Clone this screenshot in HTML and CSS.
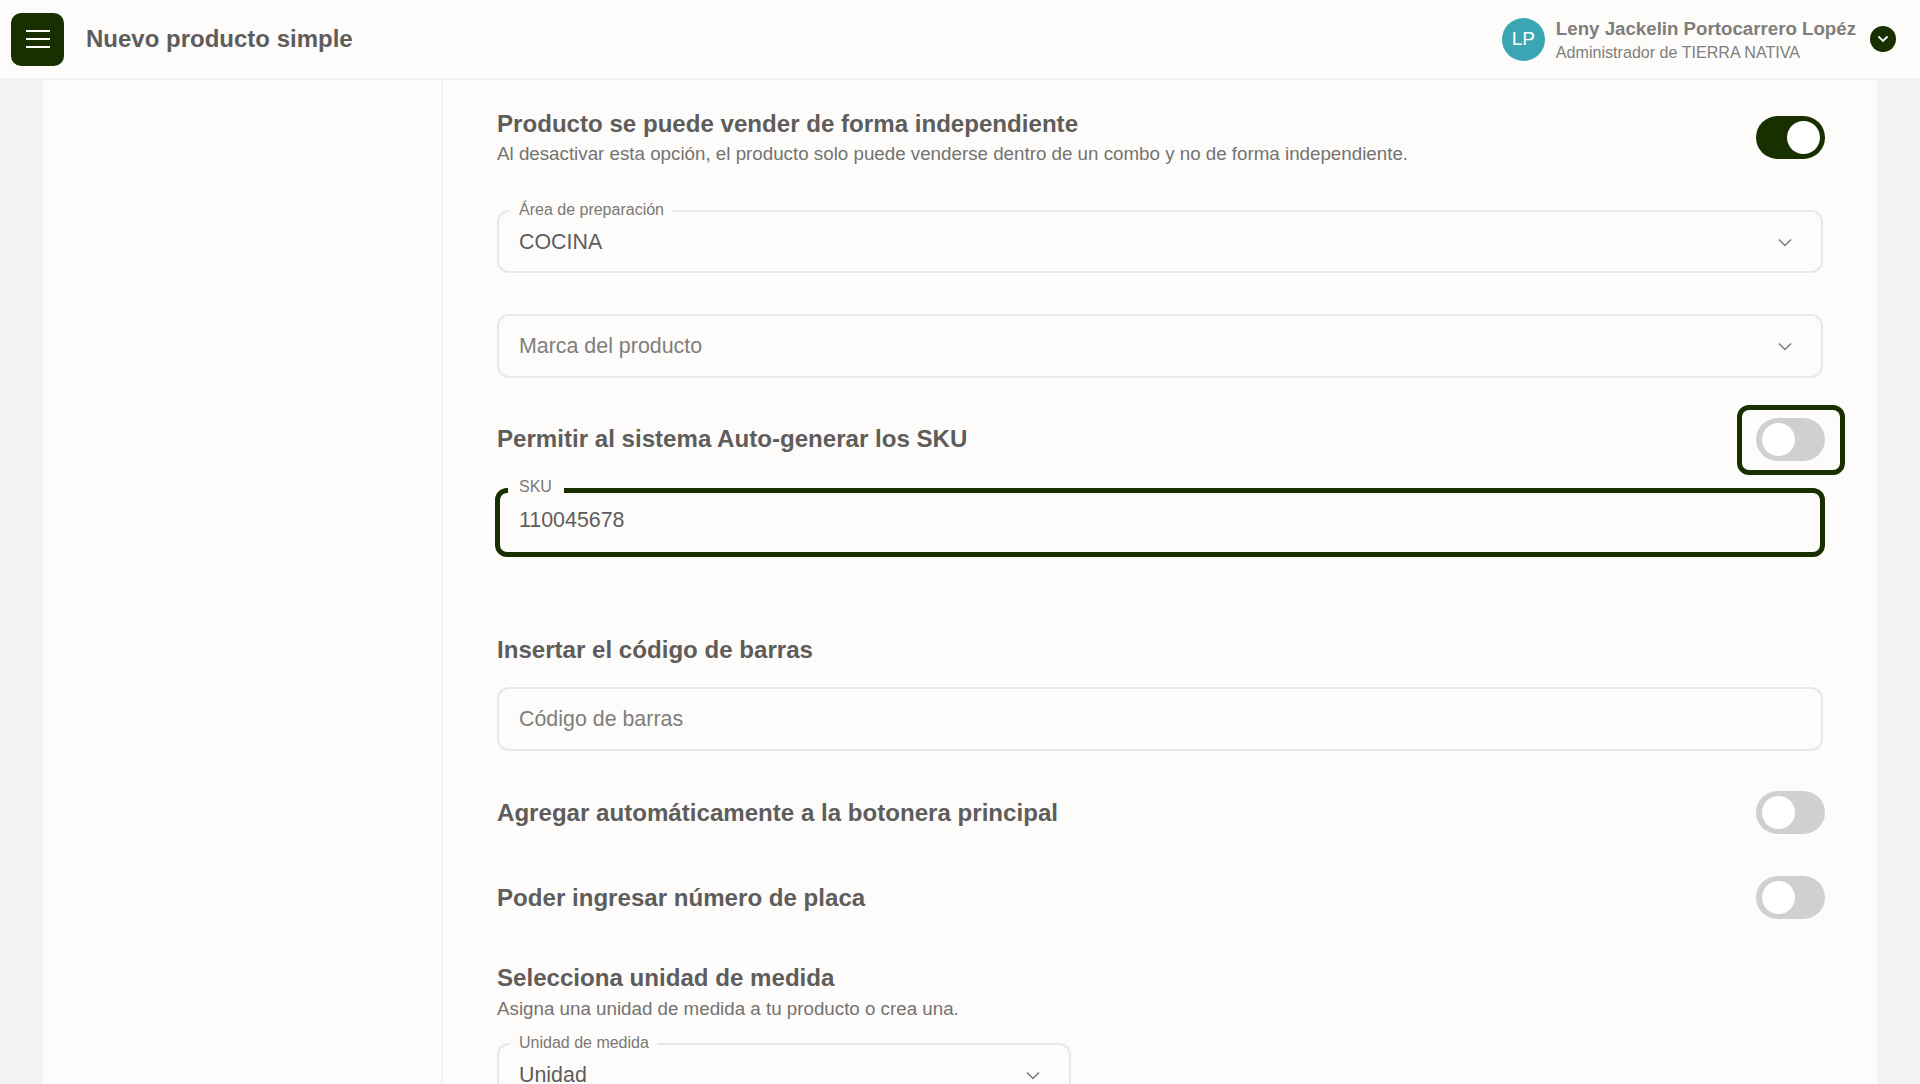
FILE: index.html
```html
<!DOCTYPE html>
<html lang="es">

<head>
    <meta charset="UTF-8">
    <title>Nuevo producto simple</title>
    <link rel="stylesheet" href="styles.css">
</head>

<body>
    <header class="topbar">
        <button class="menu-btn" type="button" aria-label="Menú">
            <svg width="26" height="20" viewBox="0 0 26 20">
                <path d="M1 2h24M1 10h24M1 18h24" stroke="#fff" stroke-width="2.2" fill="none" />
            </svg>
        </button>
        <h1 class="page-title">Nuevo producto simple</h1>
        <div class="user">
            <div class="avatar">LP</div>
            <div class="user-info">
                <div class="user-name">Leny Jackelin Portocarrero Lopéz</div>
                <div class="user-role">Administrador de TIERRA NATIVA</div>
            </div>
            <div class="user-chevron">
                <svg width="12" height="8" viewBox="0 0 12 8">
                    <path d="M1.5 1.5L6 6l4.5-4.5" stroke="#fff" stroke-width="1.8" fill="none" />
                </svg>
            </div>
        </div>
    </header>

    <main class="card">
        <aside class="side"></aside>
        <section class="form">
            <div class="row row-first">
                <div>
                    <h2 class="row-title">Producto se puede vender de forma independiente</h2>
                    <p class="row-sub">Al desactivar esta opción, el producto solo puede venderse dentro de un combo y no de forma independiente.</p>
                </div>
                <span class="toggle on"></span>
            </div>

            <fieldset class="field field-area">
                <legend>Área de preparación</legend>
                <span class="value">COCINA</span>
                <svg class="chev" width="14" height="9" viewBox="0 0 14 9">
                    <path d="M1 1.5l6 6 6-6" stroke="#777" stroke-width="1.4" fill="none" />
                </svg>
            </fieldset>

            <div class="field field-plain field-brand">
                <span class="value muted">Marca del producto</span>
                <svg class="chev" width="14" height="9" viewBox="0 0 14 9">
                    <path d="M1 1.5l6 6 6-6" stroke="#777" stroke-width="1.4" fill="none" />
                </svg>
            </div>

            <div class="row row-sku">
                <h2 class="row-title">Permitir al sistema Auto-generar los SKU</h2>
                <span class="toggle-focus"><span class="toggle"></span></span>
            </div>

            <fieldset class="field field-sku">
                <legend>SKU</legend>
                <span class="value">110045678</span>
            </fieldset>

            <h2 class="row-title title-barcode">Insertar el código de barras</h2>
            <div class="field field-plain field-barcode">
                <span class="value muted">Código de barras</span>
            </div>

            <div class="row row-auto">
                <h2 class="row-title">Agregar automáticamente a la botonera principal</h2>
                <span class="toggle"></span>
            </div>

            <div class="row row-plate">
                <h2 class="row-title">Poder ingresar número de placa</h2>
                <span class="toggle"></span>
            </div>

            <h2 class="row-title title-unit">Selecciona unidad de medida</h2>
            <p class="row-sub sub-unit">Asigna una unidad de medida a tu producto o crea una.</p>
            <fieldset class="field field-unit">
                <legend>Unidad de medida</legend>
                <span class="value">Unidad</span>
                <svg class="chev" width="14" height="9" viewBox="0 0 14 9">
                    <path d="M1 1.5l6 6 6-6" stroke="#777" stroke-width="1.4" fill="none" />
                </svg>
            </fieldset>
        </section>
    </main>
</body>

</html>
```

FILE: styles.css
```css
* {
    box-sizing: border-box;
}

html,
body {
    height: 100%;
    margin: 0;
}

body {
    display: flex;
    flex-direction: column;
    overflow: hidden;
    background-color: #f3f2f1;
    color: #5e5d5b;
    font-family: "Liberation Sans", Arial, sans-serif;
}

/* barra superior */
.topbar {
    display: flex;
    align-items: center;
    flex: none;
    height: 80px;
    padding: 0 24px 0 11px;
    background-color: #fdfcfa;
    border-bottom: 2px solid #f3f2f0;
}

.menu-btn {
    display: flex;
    align-items: center;
    justify-content: center;
    width: 53px;
    height: 53px;
    padding: 0;
    background-color: #182f00;
    border: 0;
    border-radius: 10px;
}

.page-title {
    margin: 0 0 0 22px;
    font-size: 24px;
    font-weight: bold;
}

.user {
    display: flex;
    align-items: center;
    margin-left: auto;
}

.avatar {
    display: flex;
    align-items: center;
    justify-content: center;
    width: 43px;
    height: 43px;
    background-color: #3aa6b3;
    border-radius: 50%;
    color: #fff;
    font-size: 19px;
}

.user-info {
    margin-left: 11px;
    padding-top: 1px;
    color: #7f7e7c;
}

.user-name {
    font-size: 18.7px;
    font-weight: bold;
    line-height: 24px;
}

.user-role {
    font-size: 16.1px;
    line-height: 22px;
}

.user-chevron {
    display: flex;
    align-items: center;
    justify-content: center;
    width: 26px;
    height: 26px;
    margin-left: 14px;
    background-color: #182f00;
    border-radius: 50%;
}

/* tarjeta principal */
.card {
    display: flex;
    flex: 1;
    min-height: 0;
    margin: 0 43px;
    background-color: #fdfcfa;
}

.side {
    flex: none;
    width: 400px;
    border-right: 2px solid #f4f3f1;
}

.form {
    flex: 1;
    min-width: 0;
    padding: 28px 54px 0 54px;
}

.row {
    display: flex;
    align-items: center;
    justify-content: space-between;
}

.row-title {
    margin: 0;
    font-size: 24.1px;
    font-weight: bold;
    line-height: 32px;
}

.row-sub {
    margin: 0;
    color: #747371;
    font-size: 18.75px;
    line-height: 28px;
}

/* toggles */
.toggle {
    position: relative;
    display: block;
    flex: none;
    width: 69px;
    height: 43px;
    margin-right: -2px;
    background-color: #d1d0ce;
    border-radius: 22px;
}

.toggle::after {
    content: "";
    position: absolute;
    top: 5px;
    left: 6px;
    width: 33px;
    height: 33px;
    background-color: #fff;
    border-radius: 50%;
}

.toggle.on {
    margin-bottom: 2px;
    background-color: #182f00;
}

.toggle.on::after {
    left: 31px;
}

.toggle-focus {
    display: block;
    flex: none;
    margin-right: -22px;
    padding: 8px 15px 9px 14px;
    border: 5px solid #182f00;
    border-radius: 12px;
}

.toggle-focus .toggle {
    margin-right: 0;
}

/* campos */
.field {
    position: relative;
    display: flex;
    align-items: center;
    justify-content: space-between;
    min-width: 0;
    margin: 0;
    padding: 0 29px 0 20px;
    border: 2px solid #e9e8e6;
    border-radius: 12px;
}

.field legend {
    margin-left: -10px;
    padding: 0 8px 2px 10px;
    color: #7a7977;
    font-size: 16px;
    line-height: 16px;
}

.field-plain {
    height: 64px;
}

.value {
    font-size: 21.4px;
}

.muted {
    color: #7f7e7c;
}

.field-area {
    height: 71px;
    margin-top: 34px;
    padding-bottom: 7px;
}

.field-brand {
    margin-top: 41px;
}

.row-sku {
    margin-top: 27px;
}

.row-sku .row-title {
    margin-bottom: 3px;
}

.field-sku {
    height: 78px;
    margin: 4px -2px 0;
    padding-bottom: 12px;
    padding-left: 19px;
    border: 5px solid #182f00;
}

.field-sku legend {
    margin-left: -11px;
    padding: 0 12px 6px 11px;
}

.title-barcode {
    margin-top: 77px;
}

.field-barcode {
    margin-top: 21px;
}

.row-auto {
    margin-top: 40px;
}

.row-plate {
    margin-top: 42px;
}

.title-unit {
    margin-top: 43px;
}

.sub-unit {
    margin-top: 1px;
}

.field-unit {
    width: 574px;
    height: 71px;
    margin-top: 12px;
    padding-bottom: 7px;
}
```
